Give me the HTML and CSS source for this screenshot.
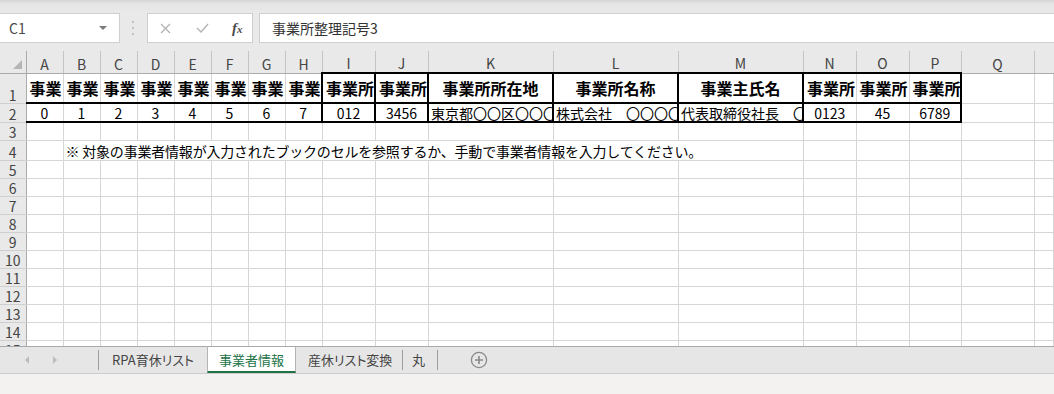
FILE: index.html
```html
<!DOCTYPE html>
<html lang="ja">
<head>
    <meta charset="UTF-8">
    <meta name="viewport" content="width=device-width, initial-scale=1.0">
    <title>事業者情報</title>
    <link rel="stylesheet" href="styles.css">
</head>
<body>
<div class="app">
    <!-- Formula bar -->
    <div class="formula-bar">
        <div class="name-box">
            <span>C1</span>
            <span class="caret"></span>
        </div>
        <div class="grip">
            <svg width="3" height="14" viewBox="0 0 3 14"><rect x="0" y="0" width="2" height="2" fill="#c2c2c2"/><rect x="0" y="6" width="2" height="2" fill="#c2c2c2"/><rect x="0" y="12" width="2" height="2" fill="#c2c2c2"/></svg>
        </div>
        <div class="fx-box">
            <svg class="btn-cancel" width="11" height="11" viewBox="0 0 11 11"><path d="M1 1 L10 10 M10 1 L1 10" stroke="#b3b3b3" stroke-width="1.3" fill="none"/></svg>
            <svg class="btn-enter" width="13" height="10" viewBox="0 0 13 10"><path d="M1 5 L5 9 L12 1" stroke="#b3b3b3" stroke-width="1.4" fill="none"/></svg>
            <span class="fx">f<span>x</span></span>
        </div>
        <div class="formula-input">事業所整理記号3</div>
    </div>

    <!-- Sheet grid -->
    <div class="sheet">
        <table class="grid">
            <colgroup>
                <col class="w-head">
                <col class="w-s"><col class="w-s"><col class="w-s"><col class="w-s">
                <col class="w-s"><col class="w-s"><col class="w-s"><col class="w-s">
                <col class="w-m"><col class="w-m">
                <col class="w-l"><col class="w-l"><col class="w-l">
                <col class="w-m"><col class="w-m"><col class="w-p">
                <col class="w-q"><col>
            </colgroup>
            <thead>
                <tr>
                    <th class="corner"><span class="tri"></span></th>
                    <th>A</th><th>B</th><th>C</th><th>D</th><th>E</th><th>F</th><th>G</th><th>H</th>
                    <th>I</th><th>J</th><th>K</th><th>L</th><th>M</th><th>N</th><th>O</th><th>P</th>
                    <th>Q</th><th></th>
                </tr>
            </thead>
            <tbody>
                <tr class="r1">
                    <th>1</th>
                    <td>事業</td><td>事業</td><td>事業</td><td>事業</td><td>事業</td><td>事業</td><td>事業</td><td>事業</td>
                    <td class="tl">事業所</td>
                    <td class="tl">事業所</td>
                    <td class="tl ctr">事業所所在地</td>
                    <td class="tl ctr">事業所名称</td>
                    <td class="tl ctr">事業主氏名</td>
                    <td class="tl">事業所</td>
                    <td class="bl">事業所</td>
                    <td class="bl tr">事業所</td>
                    <td class="free"></td><td class="free"></td>
                </tr>
                <tr class="r2">
                    <th>2</th>
                    <td>0</td><td class="bl">1</td><td class="bl">2</td><td class="bl">3</td><td class="bl">4</td><td class="bl">5</td><td class="bl">6</td><td class="bl">7</td>
                    <td class="tl">012</td>
                    <td class="tl">3456</td>
                    <td class="tl txt">東京都〇〇区〇〇〇</td>
                    <td class="tl txt">株式会社　〇〇〇〇</td>
                    <td class="tl txt">代表取締役社長　〇〇</td>
                    <td class="tl">0123</td>
                    <td class="bl">45</td>
                    <td class="bl tr">6789</td>
                    <td class="free"></td><td class="free"></td>
                </tr>
                <tr><th>3</th><td></td><td></td><td></td><td></td><td></td><td></td><td></td><td></td><td></td><td></td><td></td><td></td><td></td><td></td><td></td><td></td><td></td><td></td></tr>
                <tr class="r4">
                    <th>4</th>
                    <td></td>
                    <td class="note" colspan="12">※ 対象の事業者情報が入力されたブックのセルを参照するか、手動で事業者情報を入力してください。</td>
                    <td></td><td></td><td></td><td></td><td></td>
                </tr>
                <tr><th>5</th><td></td><td></td><td></td><td></td><td></td><td></td><td></td><td></td><td></td><td></td><td></td><td></td><td></td><td></td><td></td><td></td><td></td><td></td></tr>
                <tr><th>6</th><td></td><td></td><td></td><td></td><td></td><td></td><td></td><td></td><td></td><td></td><td></td><td></td><td></td><td></td><td></td><td></td><td></td><td></td></tr>
                <tr><th>7</th><td></td><td></td><td></td><td></td><td></td><td></td><td></td><td></td><td></td><td></td><td></td><td></td><td></td><td></td><td></td><td></td><td></td><td></td></tr>
                <tr><th>8</th><td></td><td></td><td></td><td></td><td></td><td></td><td></td><td></td><td></td><td></td><td></td><td></td><td></td><td></td><td></td><td></td><td></td><td></td></tr>
                <tr><th>9</th><td></td><td></td><td></td><td></td><td></td><td></td><td></td><td></td><td></td><td></td><td></td><td></td><td></td><td></td><td></td><td></td><td></td><td></td></tr>
                <tr><th>10</th><td></td><td></td><td></td><td></td><td></td><td></td><td></td><td></td><td></td><td></td><td></td><td></td><td></td><td></td><td></td><td></td><td></td><td></td></tr>
                <tr><th>11</th><td></td><td></td><td></td><td></td><td></td><td></td><td></td><td></td><td></td><td></td><td></td><td></td><td></td><td></td><td></td><td></td><td></td><td></td></tr>
                <tr><th>12</th><td></td><td></td><td></td><td></td><td></td><td></td><td></td><td></td><td></td><td></td><td></td><td></td><td></td><td></td><td></td><td></td><td></td><td></td></tr>
                <tr><th>13</th><td></td><td></td><td></td><td></td><td></td><td></td><td></td><td></td><td></td><td></td><td></td><td></td><td></td><td></td><td></td><td></td><td></td><td></td></tr>
                <tr><th>14</th><td></td><td></td><td></td><td></td><td></td><td></td><td></td><td></td><td></td><td></td><td></td><td></td><td></td><td></td><td></td><td></td><td></td><td></td></tr>
                <tr><th>15</th><td></td><td></td><td></td><td></td><td></td><td></td><td></td><td></td><td></td><td></td><td></td><td></td><td></td><td></td><td></td><td></td><td></td><td></td></tr>
            </tbody>
        </table>
    </div>

    <!-- Sheet tabs -->
    <div class="tab-bar">
        <div class="tab-nav">
            <span class="arrow left"></span>
            <span class="arrow right"></span>
        </div>
        <span class="sep"></span>
        <div class="tab t1">RPA育休リスト</div>
        <div class="tab active">事業者情報</div>
        <div class="tab t3">産休リスト変換</div>
        <span class="sep"></span>
        <div class="tab t4">丸</div>
        <span class="sep"></span>
        <svg class="add-sheet" width="18" height="18" viewBox="0 0 18 18">
            <circle cx="9" cy="9" r="7.6" stroke="#8a8a8a" stroke-width="1.3" fill="none"/>
            <path d="M9 5 V13 M5 9 H13" stroke="#8a8a8a" stroke-width="1.6"/>
        </svg>
    </div>

    <div class="status-bar"></div>
</div>
</body>
</html>
```

FILE: styles.css
```css
body {
    margin: 0;
    background-color: #ffffff;
    font-family: "Noto Sans CJK JP", "Liberation Sans", sans-serif;
}
.app {
    width: 1054px;
    height: 394px;
    display: flex;
    flex-direction: column;
    overflow: hidden;
}

/* Formula bar */
.formula-bar {
    height: 51px;
    flex: none;
    box-sizing: border-box;
    padding-top: 13px;
    display: flex;
    align-items: flex-start;
    background: linear-gradient(#d6d6d6, #e6e6e6 4px, #e9e9e9 12px);
}
.name-box {
    width: 120px;
    height: 30px;
    box-sizing: border-box;
    background-color: #fff;
    border: 1px solid #cfcfcf;
    border-left: none;
    display: flex;
    align-items: center;
    justify-content: space-between;
    padding: 0 12px 0 9px;
    font-size: 14px;
    color: #4a4a4a;
}
.caret {
    width: 0;
    height: 0;
    border-left: 4px solid transparent;
    border-right: 4px solid transparent;
    border-top: 4px solid #7a7a7a;
}
.grip {
    width: 27px;
    height: 30px;
    display: flex;
    align-items: center;
    justify-content: center;
}
.fx-box {
    width: 106px;
    height: 30px;
    box-sizing: border-box;
    background-color: #fff;
    border: 1px solid #cfcfcf;
    display: flex;
    align-items: center;
    padding-left: 12px;
}
.btn-enter {
    margin-left: 25px;
}
.fx {
    margin-left: 23px;
    font-family: "Liberation Serif", serif;
    font-style: italic;
    font-weight: bold;
    font-size: 15px;
    color: #4d4d4d;
}
.fx span {
    font-size: 11px;
}
.formula-input {
    flex: 1;
    height: 30px;
    margin-left: 6px;
    box-sizing: border-box;
    background-color: #fff;
    border: 1px solid #cfcfcf;
    border-right: none;
    padding-left: 12px;
    line-height: 28px;
    font-size: 14px;
    color: #333;
}

/* Grid */
.sheet {
    height: 295px;
    flex: none;
    overflow: hidden;
    background-color: #fff;
}
.grid {
    border-collapse: collapse;
    table-layout: fixed;
    width: 1054px;
}
.w-head { width: 26px; }
.w-s { width: 37px; }
.w-m { width: 53px; }
.w-l { width: 125px; }
.w-p { width: 52px; }
.w-q { width: 73px; }

.grid th,
.grid td {
    padding: 0;
    overflow: hidden;
    white-space: nowrap;
}
.grid thead th {
    height: 20px;
    background-color: #e9e9e9;
    border-left: 1px solid #c4c4c4;
    border-bottom: 1px solid #ababab;
    font-size: 14px;
    font-weight: normal;
    color: #444;
    line-height: 16px;
    vertical-align: bottom;
    padding-bottom: 1px;
}
.grid thead th.corner {
    border-left: none;
    border-right: 1px solid #ababab;
    position: relative;
}
.tri {
    position: absolute;
    right: 4px;
    bottom: 4px;
    width: 0;
    height: 0;
    border-left: 9px solid transparent;
    border-bottom: 9px solid #b5b5b5;
}
.grid tbody th {
    height: 17px;
    background-color: #e9e9e9;
    border-right: 1px solid #ababab;
    border-bottom: 1px solid #cfcfcf;
    font-size: 14px;
    font-weight: normal;
    color: #444;
    line-height: 15px;
    vertical-align: bottom;
    text-align: center;
}
.grid td {
    height: 17px;
    border: 1px solid #d6d6d6;
    font-size: 14px;
    line-height: 16px;
    color: #000;
}

/* Header rows of the table */
.r1 th,
.r1 td {
    height: 28px;
}
.r1 td {
    font-size: 16px;
    font-weight: bold;
    padding-left: 3px;
    vertical-align: middle;
    border-bottom: 2px solid #000;
}
.r1 td.ctr {
    text-align: center;
    padding-left: 0;
}
.r1 td.tl,
.r1 td.bl {
    border-top: 2px solid #000;
}
.r2 th,
.r2 td {
    height: 17px;
}
.r2 td {
    text-align: center;
    vertical-align: bottom;
    border-bottom: 2px solid #000;
}
.r2 td.txt {
    text-align: left;
    padding-left: 2px;
}
.r1 td.free,
.r2 td.free {
    border-top: 1px solid #d6d6d6;
    border-bottom: 1px solid #d6d6d6;
}
.grid td.bl {
    border-left: 1px solid #000;
}
.grid td.tl {
    border-left: 2px solid #000;
}
.grid td.tr {
    border-right: 2px solid #000;
}
.r4 th,
.r4 td {
    height: 19px;
}
.grid td.note {
    padding-left: 2px;
    letter-spacing: -0.2px;
    vertical-align: middle;
}

/* Sheet tabs */
.tab-bar {
    height: 28px;
    flex: none;
    box-sizing: border-box;
    background-color: #e6e6e6;
    border-top: 1px solid #a9a9a9;
    border-bottom: 1px solid #cdcdcd;
    display: flex;
    align-items: center;
    font-size: 13px;
    color: #444;
    font-feature-settings: "palt";
}
.tab-nav {
    width: 98px;
    display: flex;
    align-items: center;
}
.arrow {
    width: 0;
    height: 0;
    border-top: 4px solid transparent;
    border-bottom: 4px solid transparent;
}
.arrow.left {
    margin-left: 25px;
    border-right: 4px solid #bdbdbd;
}
.arrow.right {
    margin-left: 24px;
    border-left: 4px solid #bdbdbd;
}
.sep {
    width: 1px;
    height: 20px;
    background-color: #9e9e9e;
}
.tab {
    height: 26px;
    line-height: 26px;
    box-sizing: border-box;
    white-space: nowrap;
}
.t1 {
    width: 108px;
    padding-left: 13px;
}
.tab.active {
    width: 89px;
    margin-top: -1px;
    height: 27px;
    text-align: center;
    background-color: #fff;
    border: 1px solid #b4b4b4;
    border-top-color: #a9a9a9;
    border-bottom: 2px solid #217346;
    color: #217346;
}
.t3 {
    width: 106px;
    padding-left: 12px;
}
.t4 {
    width: 34px;
    padding-left: 9px;
}
.add-sheet {
    margin-left: 32px;
}

.status-bar {
    flex: 1;
    background-color: #f3f2f1;
}
```
